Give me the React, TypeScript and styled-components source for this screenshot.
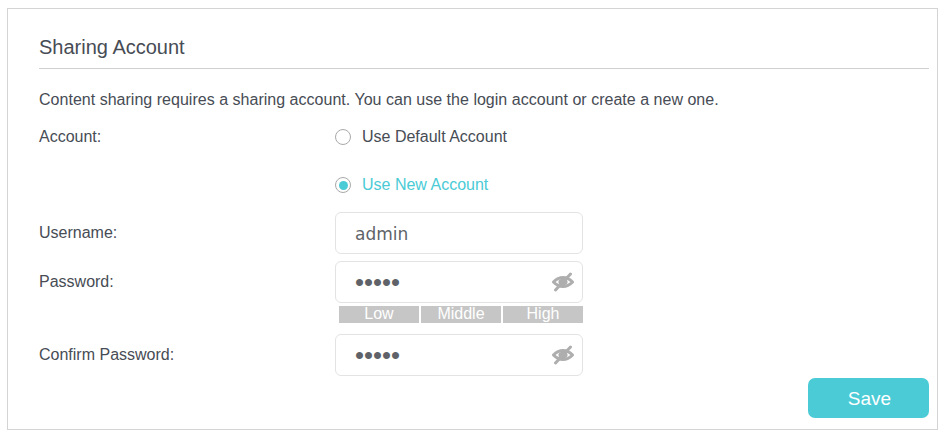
import React from "react";
import styled, { createGlobalStyle } from "styled-components";

const Global = createGlobalStyle`
  html, body { margin: 0; padding: 0; background: #fff; }
  body { font-family: "Liberation Sans", Arial, sans-serif; color: #4a4f57; }
`;

const Page = styled.div`
  width: 948px;
  height: 438px;
  padding: 8px 10px 0 7px;
  box-sizing: border-box;
`;

const Panel = styled.section`
  height: 422px;
  box-sizing: border-box;
  border: 1px solid #d4d4d4;
  padding: 24px 8px 0 31px;
  display: flex;
  flex-direction: column;
`;

const Title = styled.h2`
  margin: 0;
  height: 35px;
  line-height: 28px;
  font-size: 20px;
  font-weight: 400;
  color: #474c55;
  border-bottom: 1px solid #cfcfcf;
`;

const Intro = styled.p`
  margin: 22px 0 0;
  font-size: 16px;
  line-height: 18px;
  letter-spacing: 0.02px;
  color: #474c55;
  white-space: nowrap;
`;

const Row = styled.div<{ $top: number }>`
  display: grid;
  grid-template-columns: 296px 248px;
  align-items: center;
  margin-top: ${(p) => p.$top}px;
`;

const Label = styled.span`
  font-size: 16px;
  line-height: 18px;
  color: #474c55;
`;

const RadioLine = styled.div<{ $on?: boolean }>`
  grid-column: 2;
  display: flex;
  align-items: center;
  gap: 11px;
  height: 20px;
  white-space: nowrap;
  font-size: 16px;
  color: ${(p) => (p.$on ? "#4acbd6" : "#474c55")};
`;

const RadioMark = styled.span<{ $on?: boolean }>`
  width: 16px;
  height: 16px;
  box-sizing: border-box;
  border: 1.5px solid #a9a9a9;
  border-radius: 50%;
  display: flex;
  align-items: center;
  justify-content: center;
  &::after {
    content: "";
    width: 9px;
    height: 9px;
    border-radius: 50%;
    background: ${(p) => (p.$on ? "#4acbd6" : "transparent")};
  }
`;

const Field = styled.div`
  height: 42px;
  box-sizing: border-box;
  border: 1px solid #e3e3e3;
  border-radius: 6px;
  padding: 0 8px 0 19px;
  display: flex;
  align-items: center;
  justify-content: space-between;
`;

const Value = styled.span`
  font-family: "DejaVu Sans", sans-serif;
  font-size: 17px;
  color: #5f6369;
  padding-top: 2px;
`;

const Dots = styled.span`
  font-size: 25.7px;
  line-height: 24px;
  color: #5f6369;
`;

const Strength = styled.div`
  grid-column: 2;
  margin-left: 4px;
  display: grid;
  grid-template-columns: 80px 80px 80px;
  gap: 2px;
`;

const Level = styled.span`
  height: 17px;
  line-height: 16px;
  background: #c6c6c6;
  color: #fff;
  text-align: center;
  font-size: 16px;
`;

const Footer = styled.div`
  display: flex;
  justify-content: flex-end;
  margin-top: 2px;
`;

const Save = styled.button`
  width: 121px;
  height: 40px;
  border: 0;
  border-radius: 7px;
  background: #4acbd6;
  color: #fff;
  font-family: inherit;
  font-size: 19px;
  padding: 2px 0 0 2px;
`;

const Eye = () => (
  <svg width="22" height="20" viewBox="0 0 22 20" aria-hidden="true">
    <path
      d="M1.5 10C4.5 6.8 7.7 5.4 11 5.4s6.5 1.4 9.5 4.6c-3 3.2-6.2 4.6-9.5 4.6S4.5 13.2 1.5 10Z"
      fill="none"
      stroke="#aeaeae"
      strokeWidth="3"
    />
    <ellipse cx="11" cy="10" rx="4.6" ry="3.2" fill="#aeaeae" />
    <path d="M18.5 2 3.5 18" stroke="#aeaeae" strokeWidth="3" strokeLinecap="round" />
  </svg>
);

export default function App() {
  return (
    <Page>
      <Global />
      <Panel>
        <Title>Sharing Account</Title>
        <Intro>Content sharing requires a sharing account. You can use the login account or create a new one.</Intro>
        <Row $top={18}>
          <Label>Account:</Label>
          <RadioLine>
            <RadioMark />
            Use Default Account
          </RadioLine>
        </Row>
        <Row $top={28}>
          <RadioLine $on>
            <RadioMark $on />
            Use New Account
          </RadioLine>
        </Row>
        <Row $top={17}>
          <Label>Username:</Label>
          <Field>
            <Value>admin</Value>
          </Field>
        </Row>
        <Row $top={7}>
          <Label>Password:</Label>
          <Field>
            <Dots>•••••</Dots>
            <Eye />
          </Field>
        </Row>
        <Row $top={3}>
          <Strength>
            <Level>Low</Level>
            <Level>Middle</Level>
            <Level>High</Level>
          </Strength>
        </Row>
        <Row $top={11}>
          <Label>Confirm Password:</Label>
          <Field>
            <Dots>•••••</Dots>
            <Eye />
          </Field>
        </Row>
        <Footer>
          <Save>Save</Save>
        </Footer>
      </Panel>
    </Page>
  );
}
